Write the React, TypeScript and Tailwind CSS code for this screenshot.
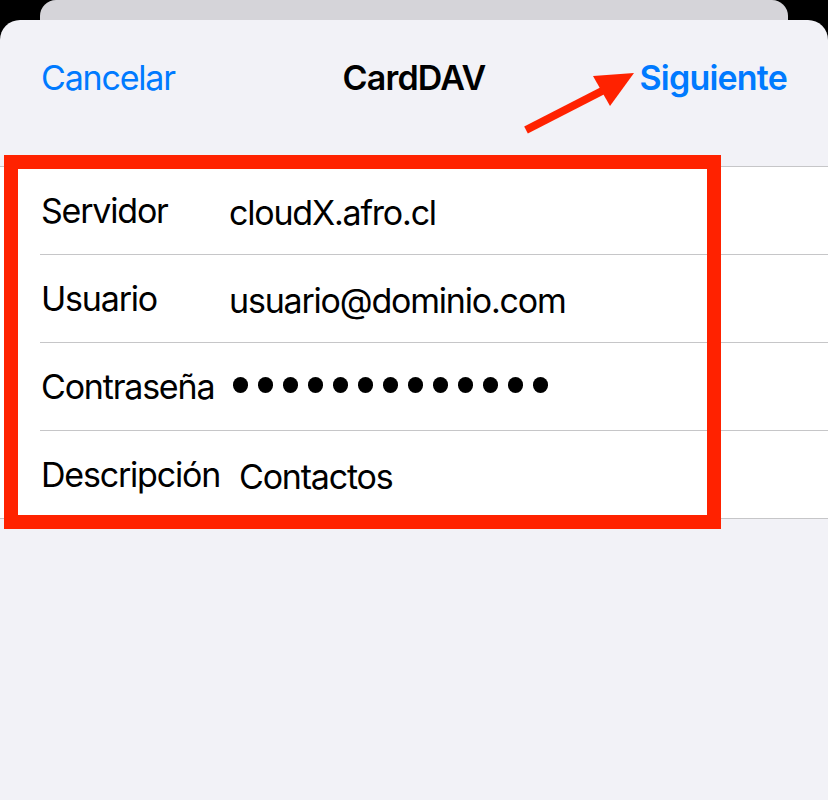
import React from "react";

type Field = {
  label: string;
  value?: string;
  secret?: number;
};

const fields: Field[] = [
  { label: "Servidor", value: "cloudX.afro.cl" },
  { label: "Usuario", value: "usuario@dominio.com" },
  { label: "Contraseña", secret: 13 },
  { label: "Descripción", value: "Contactos" },
];

const font = { fontFamily: "Inter, 'Noto Sans', sans-serif" };

const Row = ({ field, last }: { field: Field; last: boolean }) => {
  return (
    <div className="pl-[40px]">
      <div
        className={`flex items-center ${
          last ? "h-[87px]" : "h-[88px] border-b border-[#c6c6c8]"
        }`}
      >
        <span className="pl-[1px] min-w-[170px] mr-[19px] text-[34px] tracking-[-1.2px] text-black">
          {field.label}
        </span>
        {field.secret ? (
          <div className="flex gap-[10px] -mt-[4px]">
            {Array.from({ length: field.secret }).map((_, i) => (
              <span key={i} className="block w-[15px] h-[16px] rounded-full bg-black" />
            ))}
          </div>
        ) : (
          <span className="pt-[3px] text-[34px] tracking-[-1.2px] text-black">
            {field.value}
          </span>
        )}
      </div>
    </div>
  );
};

const App = () => {
  return (
    <div className="relative w-[828px] h-[800px] bg-black overflow-hidden" style={font}>
      {/* card behind */}
      <div className="mx-[40px] h-[40px] rounded-t-[16px] bg-[#d5d4d9]" />

      {/* sheet */}
      <div className="-mt-[20px] h-[780px] rounded-t-[20px] bg-[#f2f2f7]">
        <div className="h-[114px] px-[41px] grid grid-cols-[1fr_auto_1fr] items-center">
          <span className="text-[34px] tracking-[-1.2px] text-[#007aff]">Cancelar</span>
          <span className="text-[34px] tracking-[-0.8px] font-semibold text-black">CardDAV</span>
          <span className="text-right text-[34px] tracking-[-0.8px] font-semibold text-[#007aff]">
            Siguiente
          </span>
        </div>

        <div className="mt-[32px] bg-white border-t border-b border-[#c6c6c8]">
          {fields.map((f, i) => (
            <Row key={f.label} field={f} last={i === fields.length - 1} />
          ))}
        </div>
      </div>

      {/* annotation: red box */}
      <div className="absolute left-[4px] top-[155px] w-[717px] h-[374px] border-[14px] border-[#ff2200]" />

      {/* annotation: arrow */}
      <svg
        className="absolute left-0 top-0"
        width="828"
        height="800"
        viewBox="0 0 828 800"
      >
        <line x1="526" y1="130" x2="604" y2="90" stroke="#ff2200" strokeWidth="8" />
        <polygon points="593,76 634,73 610,106" fill="#ff2200" />
      </svg>
    </div>
  );
};

export default App;
